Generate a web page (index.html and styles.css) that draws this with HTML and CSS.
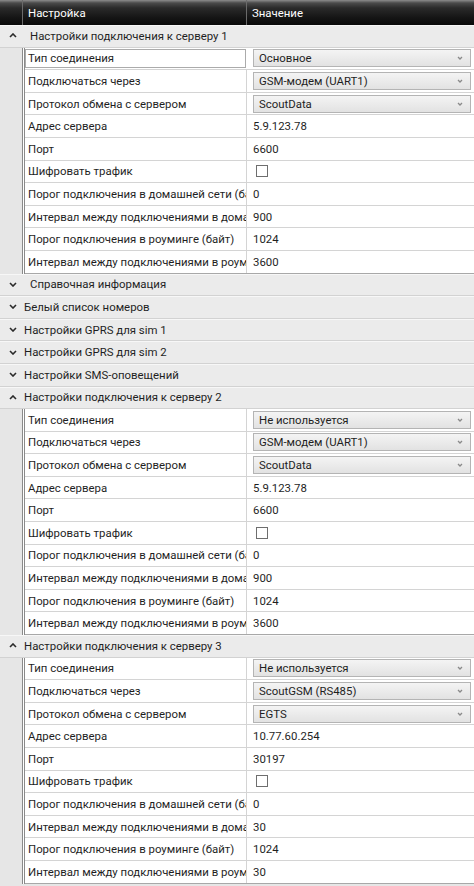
FILE: index.html
```html
<!DOCTYPE html>
<html lang="ru">
<head>
<meta charset="utf-8">
<title>Настройки</title>
<link rel="stylesheet" href="styles.css">
</head>
<body>
<div class="grid">
  <div class="head">
    <div class="hc hc-indent"></div>
    <div class="hc hc-name">Настройка</div>
    <div class="hc hc-val">Значение</div>
  </div>

  <section class="group">
    <div class="ghead gh-wide"><svg class="caret" viewBox="0 0 8 5"><path d="M1 4 L4 1 L7 4"/></svg><span>Настройки подключения к серверу 1</span></div>
    <div class="rows">
      <div class="row"><div class="name sel">Тип соединения</div><div class="val"><div class="combo">Основное<svg class="dd" viewBox="0 0 6 4"><path d="M1 1 L3 3 L5 1"/></svg></div></div></div>
      <div class="row"><div class="name">Подключаться через</div><div class="val"><div class="combo">GSM-модем (UART1)<svg class="dd" viewBox="0 0 6 4"><path d="M1 1 L3 3 L5 1"/></svg></div></div></div>
      <div class="row"><div class="name">Протокол обмена с сервером</div><div class="val"><div class="combo">ScoutData<svg class="dd" viewBox="0 0 6 4"><path d="M1 1 L3 3 L5 1"/></svg></div></div></div>
      <div class="row"><div class="name">Адрес сервера</div><div class="val">5.9.123.78</div></div>
      <div class="row"><div class="name">Порт</div><div class="val">6600</div></div>
      <div class="row"><div class="name">Шифровать трафик</div><div class="val"><span class="check"></span></div></div>
      <div class="row"><div class="name"><span class="clip">Порог подключения в домашней сети (байт)</span></div><div class="val">0</div></div>
      <div class="row"><div class="name"><span class="clip">Интервал между подключениями в домашней сети</span></div><div class="val">900</div></div>
      <div class="row"><div class="name">Порог подключения в роуминге (байт)</div><div class="val">1024</div></div>
      <div class="row"><div class="name"><span class="clip">Интервал между подключениями в роуминге</span></div><div class="val">3600</div></div>
    </div>
  </section>

  <section class="group"><div class="ghead gh-wide"><svg class="caret" viewBox="0 0 8 5"><path d="M1 1 L4 4 L7 1"/></svg><span>Справочная информация</span></div></section>
  <section class="group"><div class="ghead"><svg class="caret" viewBox="0 0 8 5"><path d="M1 1 L4 4 L7 1"/></svg><span>Белый список номеров</span></div></section>
  <section class="group"><div class="ghead"><svg class="caret" viewBox="0 0 8 5"><path d="M1 1 L4 4 L7 1"/></svg><span>Настройки GPRS для sim 1</span></div></section>
  <section class="group"><div class="ghead"><svg class="caret" viewBox="0 0 8 5"><path d="M1 1 L4 4 L7 1"/></svg><span>Настройки GPRS для sim 2</span></div></section>
  <section class="group"><div class="ghead"><svg class="caret" viewBox="0 0 8 5"><path d="M1 1 L4 4 L7 1"/></svg><span>Настройки SMS-оповещений</span></div></section>

  <section class="group">
    <div class="ghead"><svg class="caret" viewBox="0 0 8 5"><path d="M1 4 L4 1 L7 4"/></svg><span>Настройки подключения к серверу 2</span></div>
    <div class="rows">
      <div class="row"><div class="name">Тип соединения</div><div class="val"><div class="combo">Не используется<svg class="dd" viewBox="0 0 6 4"><path d="M1 1 L3 3 L5 1"/></svg></div></div></div>
      <div class="row"><div class="name">Подключаться через</div><div class="val"><div class="combo">GSM-модем (UART1)<svg class="dd" viewBox="0 0 6 4"><path d="M1 1 L3 3 L5 1"/></svg></div></div></div>
      <div class="row"><div class="name">Протокол обмена с сервером</div><div class="val"><div class="combo">ScoutData<svg class="dd" viewBox="0 0 6 4"><path d="M1 1 L3 3 L5 1"/></svg></div></div></div>
      <div class="row"><div class="name">Адрес сервера</div><div class="val">5.9.123.78</div></div>
      <div class="row"><div class="name">Порт</div><div class="val">6600</div></div>
      <div class="row"><div class="name">Шифровать трафик</div><div class="val"><span class="check"></span></div></div>
      <div class="row"><div class="name"><span class="clip">Порог подключения в домашней сети (байт)</span></div><div class="val">0</div></div>
      <div class="row"><div class="name"><span class="clip">Интервал между подключениями в домашней сети</span></div><div class="val">900</div></div>
      <div class="row"><div class="name">Порог подключения в роуминге (байт)</div><div class="val">1024</div></div>
      <div class="row"><div class="name"><span class="clip">Интервал между подключениями в роуминге</span></div><div class="val">3600</div></div>
    </div>
  </section>

  <section class="group">
    <div class="ghead"><svg class="caret" viewBox="0 0 8 5"><path d="M1 4 L4 1 L7 4"/></svg><span>Настройки подключения к серверу 3</span></div>
    <div class="rows">
      <div class="row"><div class="name">Тип соединения</div><div class="val"><div class="combo">Не используется<svg class="dd" viewBox="0 0 6 4"><path d="M1 1 L3 3 L5 1"/></svg></div></div></div>
      <div class="row"><div class="name">Подключаться через</div><div class="val"><div class="combo">ScoutGSM (RS485)<svg class="dd" viewBox="0 0 6 4"><path d="M1 1 L3 3 L5 1"/></svg></div></div></div>
      <div class="row"><div class="name">Протокол обмена с сервером</div><div class="val"><div class="combo">EGTS<svg class="dd" viewBox="0 0 6 4"><path d="M1 1 L3 3 L5 1"/></svg></div></div></div>
      <div class="row"><div class="name">Адрес сервера</div><div class="val">10.77.60.254</div></div>
      <div class="row"><div class="name">Порт</div><div class="val">30197</div></div>
      <div class="row"><div class="name">Шифровать трафик</div><div class="val"><span class="check"></span></div></div>
      <div class="row"><div class="name"><span class="clip">Порог подключения в домашней сети (байт)</span></div><div class="val">0</div></div>
      <div class="row"><div class="name"><span class="clip">Интервал между подключениями в домашней сети</span></div><div class="val">30</div></div>
      <div class="row"><div class="name">Порог подключения в роуминге (байт)</div><div class="val">1024</div></div>
      <div class="row"><div class="name"><span class="clip">Интервал между подключениями в роуминге</span></div><div class="val">30</div></div>
    </div>
  </section>
</div>
</body>
</html>
```

FILE: styles.css
```css
* { box-sizing: border-box; }
html, body { margin: 0; padding: 0; }
body {
  width: 474px;
  height: 886px;
  overflow: hidden;
  background: #e6e6e6;
  font-family: Roboto, "Noto Sans", sans-serif;
  font-size: 11.4px;
  color: #1f1f1f;
}
.grid { display: flex; flex-direction: column; }

.head {
  display: grid;
  grid-template-columns: 22px 224px 1fr;
  height: 25px;
  background: linear-gradient(#8c8c8c 0, #4a4a4a 3px, #2a2a2a 8px, #141414 18px, #0a0a0a 100%);
  color: #fff;
}
.hc {
  display: flex;
  align-items: center;
  padding-left: 5px;
  padding-top: 1px;
  border-left: 1px solid #6a6a6a;
  white-space: nowrap;
}
.hc-indent { border-left: 0; }

.ghead {
  display: flex;
  align-items: center;
  height: 22.6px;
  background: #ebebeb;
  border-bottom: 1px solid #d2d2d2;
  box-shadow: inset 0 1px 0 #f7f7f7;
  padding-left: 9px;
  white-space: nowrap;
}
.ghead span { margin-left: 7px; }
.gh-wide span { margin-left: 13px; }
.caret {
  width: 8px;
  height: 5px;
  fill: none;
  stroke: #2a2a2a;
  stroke-width: 1.6;
  flex: none;
}

.rows {
  margin-left: 22px;
  border-left: 3px double #8a8a8a;
  background: #fff;
}
.row {
  display: grid;
  grid-template-columns: 222px 1fr;
  height: 22.6px;
  border-bottom: 1px solid #d4d4d4;
}
.row:last-child { border-bottom-color: #a8a8a8; }
.name {
  display: flex;
  align-items: center;
  padding-left: 3px;
  white-space: nowrap;
  overflow: hidden;
  border-right: 1px solid #d4d4d4;
}
.clip {
  display: block;
  max-width: 100%;
  overflow: hidden;
  white-space: nowrap;
  text-overflow: clip;
}
.name.sel {
  border: 1px solid #ababab;
  margin: 1px 1px 1px 0;
  padding-left: 2px;
}
.val {
  display: flex;
  align-items: center;
  padding-left: 6px;
  white-space: nowrap;
  overflow: hidden;
}
.combo {
  flex: 1;
  height: 18px;
  margin-right: 3px;
  display: flex;
  align-items: center;
  justify-content: space-between;
  padding: 0 7px 0 5px;
  border: 1px solid #b4b4b4;
  background: linear-gradient(#f4f4f4, #e2e2e2);
}
.dd {
  width: 6px;
  height: 4px;
  fill: none;
  stroke: #8a8a8a;
  stroke-width: 1.3;
}
.check {
  width: 12px;
  height: 12px;
  margin-left: 3px;
  border: 1px solid #6e6e6e;
  background: #fff;
}
```
